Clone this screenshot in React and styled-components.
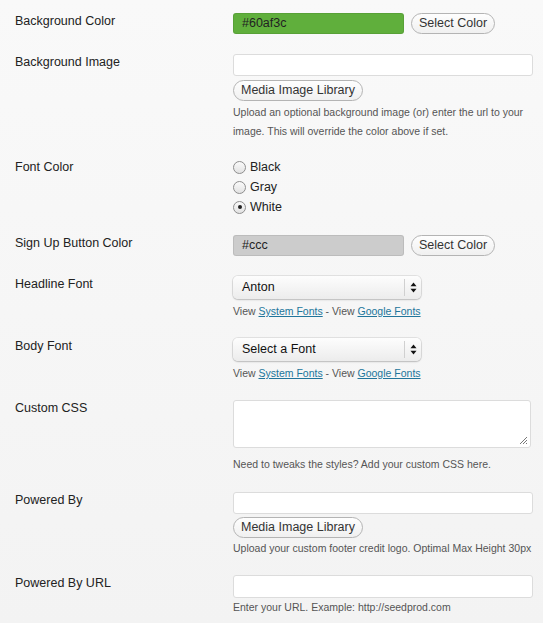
import React from 'react';
import styled, { createGlobalStyle } from 'styled-components';

const GlobalStyle = createGlobalStyle`
    html, body {
        margin: 0;
        padding: 0;
    }
    body {
        background: linear-gradient(#f9f9f9, #f3f3f3);
        min-height: 623px;
        font-family: "Liberation Sans", Arial, sans-serif;
        color: #222;
    }
`;

const Page = styled.div`
    width: 543px;
    padding-bottom: 7px;
`;

const Row = styled.div`
    display: flex;
    align-items: flex-start;
    padding-top: ${p => p.$top}px;
`;

const Label = styled.div`
    width: 233px;
    padding-left: 15px;
    box-sizing: border-box;
    flex-shrink: 0;
    font-size: 12.5px;
    line-height: 16px;
    color: #222;
`;

const Field = styled.div`
    display: flex;
    flex-direction: column;
    align-items: flex-start;
    width: 300px;
`;

const Inline = styled.div`
    display: flex;
    align-items: center;
    gap: 7px;
`;

const TextInput = styled.div`
    box-sizing: border-box;
    width: ${p => p.$width}px;
    height: ${p => p.$height || 22}px;
    background: ${p => p.$bg || '#fff'};
    border: 1px solid ${p => p.$bg ? 'rgba(0,0,0,0.08)' : '#dcdcdc'};
    border-radius: 3px;
    padding: 0 8px;
    font-size: 12.5px;
    line-height: ${p => (p.$height || 22) - 2}px;
    color: #222;
`;

const TextArea = styled.div`
    position: relative;
    box-sizing: border-box;
    width: 298px;
    height: 48px;
    background: #fff;
    border: 1px solid #dcdcdc;
    border-radius: 3px;
`;

const Grip = styled.svg`
    position: absolute;
    right: 2px;
    bottom: 2px;
`;

const Button = styled.div`
    box-sizing: border-box;
    height: 21px;
    padding: 0 7px;
    margin-top: ${p => p.$mt || 0}px;
    border: 1px solid #b4b4b4;
    border-radius: 11px;
    background: linear-gradient(#fefefe, #f0f0f0);
    font-size: 12.5px;
    line-height: 19px;
    color: #333;
    white-space: nowrap;
`;

const Desc = styled.div`
    margin-top: ${p => p.$mt || 0}px;
    font-size: 10.5px;
    line-height: 19px;
    color: #555;
`;

const Links = styled.div`
    margin-top: 4px;
    font-size: 10.5px;
    line-height: 16px;
    color: #555;

    a {
        color: #21759b;
        text-decoration: underline;
    }
`;

const Radios = styled.div`
    margin-top: -2px;
    display: flex;
    flex-direction: column;
`;

const RadioRow = styled.div`
    display: flex;
    align-items: center;
    gap: 4px;
    height: 20px;
    font-size: 12.5px;
    color: #222;
`;

const RadioDot = styled.span`
    box-sizing: border-box;
    width: 13px;
    height: 13px;
    border-radius: 50%;
    border: 1px solid #8e8e8e;
    background: linear-gradient(#fafafa, #e2e2e2);
    display: flex;
    align-items: center;
    justify-content: center;

    &::after {
        content: '';
        width: 4px;
        height: 4px;
        border-radius: 50%;
        background: ${p => p.$on ? '#222' : 'transparent'};
    }
`;

const SelectBox = styled.div`
    box-sizing: border-box;
    width: 188px;
    height: 23px;
    display: flex;
    border-radius: 5px;
    background: linear-gradient(#fdfdfd, #ececec);
    box-shadow: 0 0 0 1px rgba(0,0,0,0.08), 0 1px 2px rgba(0,0,0,0.18);
`;

const SelectText = styled.div`
    flex: 1;
    padding-left: 9px;
    font-size: 12.5px;
    line-height: 23px;
    color: #111;
`;

const SelectArrow = styled.div`
    width: 16px;
    margin: 3px 0;
    border-left: 1px solid #d0d0d0;
    display: flex;
    align-items: center;
    justify-content: center;
`;

const Arrows = () => (
    <svg width="7" height="11" viewBox="0 0 7 11">
        <path d="M3.5 0.5 L6.5 4.3 L0.5 4.3 Z" fill="#111" />
        <path d="M3.5 10.5 L6.5 6.7 L0.5 6.7 Z" fill="#111" />
    </svg>
);

const FontSelect = ({ value }) => (
    <>
        <SelectBox>
            <SelectText>{value}</SelectText>
            <SelectArrow><Arrows /></SelectArrow>
        </SelectBox>
        <Links>
            View <a>System Fonts</a> - View <a>Google Fonts</a>
        </Links>
    </>
);

export default function App() {
    return (
        <Page>
            <GlobalStyle />
            <Row $top={13}>
                <Label>Background Color</Label>
                <Inline>
                    <TextInput $width={171} $height={21} $bg="#60af3c">#60af3c</TextInput>
                    <Button>Select Color</Button>
                </Inline>
            </Row>
            <Row $top={20}>
                <Label>Background Image</Label>
                <Field>
                    <TextInput $width={300} />
                    <Button $mt={4}>Media Image Library</Button>
                    <Desc $mt={2}>
                        Upload an optional background image (or) enter the url to your image. This will override the color above if set.
                    </Desc>
                </Field>
            </Row>
            <Row $top={18}>
                <Label>Font Color</Label>
                <Radios>
                    <RadioRow><RadioDot />Black</RadioRow>
                    <RadioRow><RadioDot />Gray</RadioRow>
                    <RadioRow><RadioDot $on />White</RadioRow>
                </Radios>
            </Row>
            <Row $top={18}>
                <Label>Sign Up Button Color</Label>
                <Inline>
                    <TextInput $width={171} $height={21} $bg="#ccc">#ccc</TextInput>
                    <Button>Select Color</Button>
                </Inline>
            </Row>
            <Row $top={20}>
                <Label>Headline Font</Label>
                <Field>
                    <FontSelect value="Anton" />
                </Field>
            </Row>
            <Row $top={19}>
                <Label>Body Font</Label>
                <Field>
                    <FontSelect value="Select a Font" />
                </Field>
            </Row>
            <Row $top={19}>
                <Label>Custom CSS</Label>
                <Field>
                    <TextArea>
                        <Grip width="9" height="9" viewBox="0 0 9 9">
                            <path d="M8 1 L1 8 M8 4 L4 8 M8 7 L7 8" stroke="#777" strokeWidth="1" />
                        </Grip>
                    </TextArea>
                    <Desc $mt={7}>Need to tweaks the styles? Add your custom CSS here.</Desc>
                </Field>
            </Row>
            <Row $top={18}>
                <Label>Powered By</Label>
                <Field>
                    <TextInput $width={300} />
                    <Button $mt={3}>Media Image Library</Button>
                    <Desc $mt={1}>Upload your custom footer credit logo. Optimal Max Height 30px</Desc>
                </Field>
            </Row>
            <Row $top={17}>
                <Label>Powered By URL</Label>
                <Field>
                    <TextInput $width={300} $height={23} />
                    <Desc>Enter your URL. Example: http://seedprod.com</Desc>
                </Field>
            </Row>
        </Page>
    );
}
